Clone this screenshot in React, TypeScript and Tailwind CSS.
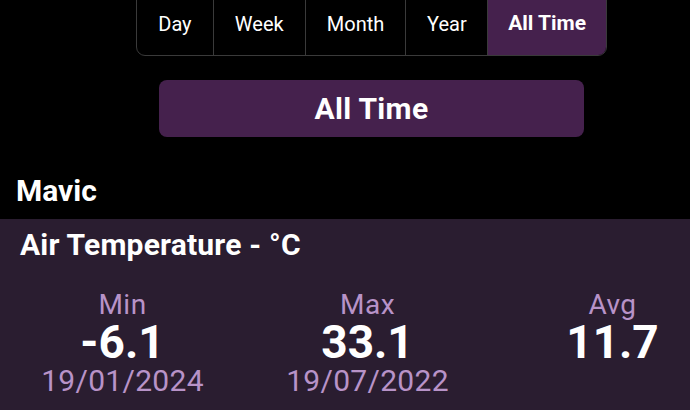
const ranges = ['Day', 'Week', 'Month', 'Year', 'All Time'];
const widths = ['w-[76px]', 'w-[92px]', 'w-[101px]', 'w-[82px]', 'w-[119px]'];

const stats = [
  { label: 'Min', value: '-6.1', date: '19/01/2024' },
  { label: 'Max', value: '33.1', date: '19/07/2022' },
  { label: 'Avg', value: '11.7', date: '' },
];

export default function App() {
  const active = 'All Time';

  return (
    <div className="h-[410px] w-[690px] overflow-hidden bg-black font-['Roboto',sans-serif] text-white">
      <div className="w-[735px]">
        <div className="-mt-[12px] ml-[136px] flex h-[68px] w-[471px] overflow-hidden rounded-[9px] border border-[#3a3a3a]">
          {ranges.map((r, i) => (
            <div
              key={r}
              className={`${widths[i]} flex items-center justify-center pt-[4px] text-[20px] ${i > 0 ? 'border-l border-[#3a3a3a]' : ''} ${r === active ? 'bg-[#45214d] text-[21px] font-bold' : ''}`}
            >
              {r}
            </div>
          ))}
        </div>

        <div className="ml-[159px] mt-[24px] flex h-[57px] w-[425px] items-center justify-center rounded-[8px] bg-[#45214d] text-[30px] font-bold tracking-[0.3px]">
          All Time
        </div>

        <div className="mt-[25px] pl-[16px] text-[30px] font-bold leading-[57px]">Mavic</div>

        <div className="h-[200px] bg-[#2a1d30] pt-[8px]">
          <div className="pl-[20px] text-[30px] font-bold leading-[36px] tracking-[0.2px]">Air Temperature - °C</div>
          <div className="mt-[27px] grid grid-cols-3">
            {stats.map((s) => (
              <div key={s.label} className="flex flex-col items-center">
                <div className="text-[28px] leading-[29px] tracking-[0.5px] text-[#b893c8]">{s.label}</div>
                <div className="text-[46px] font-bold leading-[46px]">{s.value}</div>
                <div className="text-[30px] leading-[32px] tracking-[0.3px] text-[#b893c8]">{s.date}</div>
              </div>
            ))}
          </div>
        </div>
      </div>
    </div>
  );
}
